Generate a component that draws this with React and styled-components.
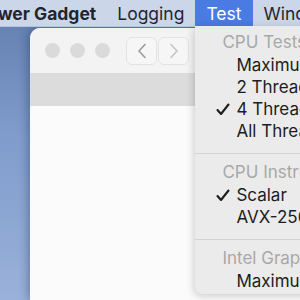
import React from 'react';
import styled, { createGlobalStyle } from 'styled-components';

const GlobalStyle = createGlobalStyle`
  html, body { margin: 0; padding: 0; }
  body { font-family: Inter, 'Liberation Sans', sans-serif; }
`;

const Screen = styled.div`
  position: relative;
  width: 300px;
  height: 300px;
  overflow: hidden;
  display: flex;
  flex-direction: column;
  background: linear-gradient(180deg, #5f7cad 0%, #7f9ccc 45%, #9ab1da 100%);
`;

const MenuBar = styled.div`
  height: 27px;
  flex: none;
  display: flex;
  align-items: stretch;
  background: #cbd7e9;
  border-bottom: 1px solid #b7c3d6;
  box-sizing: border-box;
  font-size: 17.5px;
  color: #1f2630;
  white-space: nowrap;
  position: relative;
  z-index: 3;
`;

const AppName = styled.div`
  display: flex;
  align-items: center;
  margin-left: -24px;
  padding-right: 10px;
  font-weight: 700;
`;

const MenuTitle = styled.div`
  position: relative;
  display: flex;
  align-items: center;
  padding: 0 11px;
  background: ${(p) => (p.$active ? '#4a7be3' : 'transparent')};
  color: ${(p) => (p.$active ? '#ffffff' : '#1f2630')};
`;

const Desktop = styled.div`
  flex: 1;
  display: flex;
  padding: 1px 0 0 30px;
  min-height: 0;
`;

const Window = styled.div`
  flex: none;
  width: 300px;
  display: flex;
  flex-direction: column;
  background: #fbfbfb;
  border-top-left-radius: 10px;
  overflow: hidden;
  box-shadow: -2px 0 10px rgba(20, 30, 60, 0.35);
`;

const TitleBar = styled.div`
  height: 45px;
  flex: none;
  display: flex;
  align-items: center;
  padding-left: 15px;
  background: #f3f3f3;
  box-sizing: border-box;
`;

const Lights = styled.div`
  display: flex;
  gap: 10px;
`;

const Light = styled.span`
  width: 15px;
  height: 15px;
  border-radius: 50%;
  background: #dadada;
`;

const NavGroup = styled.div`
  display: flex;
  gap: 1px;
  margin-left: 16px;
`;

const NavButton = styled.div`
  width: 31px;
  height: 28px;
  box-sizing: border-box;
  display: flex;
  align-items: center;
  justify-content: center;
  border: 1px solid #e2e2e2;
  border-radius: 6px;
  background: #f6f6f6;
  color: ${(p) => (p.$dim ? '#c4c4c4' : '#9a9a9a')};
`;

const Band = styled.div`
  height: 33px;
  flex: none;
  background: #dcdcdc;
`;

const Content = styled.div`
  flex: 1;
  background: #fbfbfb;
`;

const Dropdown = styled.div`
  position: absolute;
  top: 100%;
  left: 0;
  width: 200px;
  padding: 4px 0 2px;
  background: #ebebeb;
  border-bottom-left-radius: 7px;
  box-shadow: -1px 2px 8px rgba(0, 0, 0, 0.2);
  color: #1d1d1d;
  font-size: 17px;
  font-weight: 400;
`;

const Header = styled.div`
  height: 24px;
  display: flex;
  align-items: center;
  padding-left: 27px;
  color: #a8a8a8;
`;

const Item = styled.div`
  height: 22px;
  display: flex;
  align-items: center;
  padding-left: 21px;
  color: #1d1d1d;
`;

const CheckCol = styled.span`
  width: 20px;
  display: flex;
  align-items: center;
`;

const Separator = styled.div`
  height: 1px;
  margin: 11px 0 6px;
  background: #d2d2d2;
`;

const Chevron = ({ dir }) => (
  <svg width="10" height="16" viewBox="0 0 10 16" fill="none">
    <path
      d={dir === 'left' ? 'M8 1.5 L2 8 L8 14.5' : 'M2 1.5 L8 8 L2 14.5'}
      stroke="currentColor"
      strokeWidth="1.6"
      strokeLinecap="round"
      strokeLinejoin="round"
    />
  </svg>
);

const Check = () => (
  <svg width="14" height="13" viewBox="0 0 14 13" fill="none">
    <path
      d="M1.5 7 L5 11 L12.5 1.5"
      stroke="#1d1d1d"
      strokeWidth="2.1"
      strokeLinecap="round"
      strokeLinejoin="round"
    />
  </svg>
);

const MenuItem = ({ checked, children }) => (
  <Item>
    <CheckCol>{checked && <Check />}</CheckCol>
    {children}
  </Item>
);

export default function App() {
  return (
    <>
      <GlobalStyle />
      <Screen>
        <MenuBar>
          <AppName>Power Gadget</AppName>
          <MenuTitle>Logging</MenuTitle>
          <MenuTitle $active>
            Test
            <Dropdown>
              <Header>CPU Tests</Header>
              <MenuItem>Maximum</MenuItem>
              <MenuItem>2 Threads</MenuItem>
              <MenuItem checked>4 Threads</MenuItem>
              <MenuItem>All Threads</MenuItem>
              <Separator />
              <Header>CPU Instructions</Header>
              <MenuItem checked>Scalar</MenuItem>
              <MenuItem>AVX-256</MenuItem>
              <Separator />
              <Header>Intel Graphics</Header>
              <MenuItem>Maximum</MenuItem>
            </Dropdown>
          </MenuTitle>
          <MenuTitle>Window</MenuTitle>
        </MenuBar>
        <Desktop>
          <Window>
            <TitleBar>
              <Lights>
                <Light />
                <Light />
                <Light />
              </Lights>
              <NavGroup>
                <NavButton>
                  <Chevron dir="left" />
                </NavButton>
                <NavButton $dim>
                  <Chevron dir="right" />
                </NavButton>
              </NavGroup>
            </TitleBar>
            <Band />
            <Content />
          </Window>
        </Desktop>
      </Screen>
    </>
  );
}
